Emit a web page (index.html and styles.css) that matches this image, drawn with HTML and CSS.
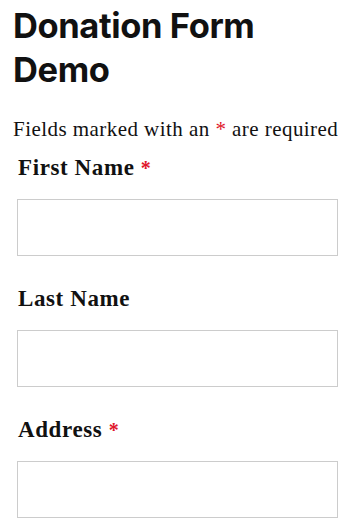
FILE: index.html
```html
<!DOCTYPE html>
<html lang="en">
<head>
<meta charset="utf-8">
<title>Donation Form Demo</title>
<link rel="stylesheet" href="styles.css">
</head>
<body>
<main class="page">
  <h1 class="title">Donation Form Demo</h1>
  <p class="note">Fields marked with an <span class="req">*</span> are required</p>
  <form class="form">
    <div class="field">
      <label class="label" for="first">First Name <span class="req">*</span></label>
      <input class="input" id="first" type="text">
    </div>
    <div class="field">
      <label class="label" for="last">Last Name</label>
      <input class="input" id="last" type="text">
    </div>
    <div class="field">
      <label class="label" for="addr">Address <span class="req">*</span></label>
      <input class="input" id="addr" type="text">
    </div>
  </form>
</main>
</body>
</html>
```

FILE: styles.css
```css
html, body {
  margin: 0;
  padding: 0;
  background: #fff;
}
.page {
  padding: 0 17px 0 13px;
  color: #111;
}
.title {
  font-family: Inter, "Liberation Sans", sans-serif;
  font-weight: 700;
  font-size: 34.5px;
  line-height: 44px;
  letter-spacing: -0.4px;
  margin: 4px 0 0 0;
  color: #111;
}
.note {
  font-family: "Liberation Serif", serif;
  font-size: 21px;
  line-height: 26px;
  letter-spacing: 0.45px;
  margin: 24px 0 0 0;
  color: #111;
  white-space: nowrap;
}
.req {
  color: #e0162b;
}
.form {
  display: flex;
  flex-direction: column;
  gap: 29px;
  padding-left: 4px;
  margin-top: 12px;
}
.field {
  display: flex;
  flex-direction: column;
  gap: 17px;
}
.label {
  font-family: "Liberation Serif", serif;
  font-weight: 700;
  font-size: 23px;
  line-height: 28px;
  letter-spacing: 0.6px;
  padding-left: 1px;
}
.label .req {
  font-size: 20px;
}
.input {
  box-sizing: border-box;
  width: 321px;
  height: 57px;
  margin: 0;
  border: 1px solid #ccc;
  border-radius: 0;
  background: #fff;
  padding: 0 10px;
  font: inherit;
}
```
